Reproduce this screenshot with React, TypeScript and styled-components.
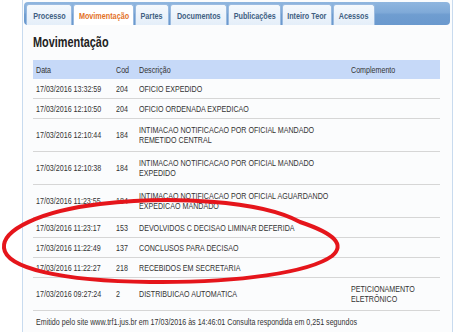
import React from "react";
import styled, { createGlobalStyle } from "styled-components";

const Global = createGlobalStyle`
  html, body { margin: 0; padding: 0; background: #ffffff; }
  body { font-family: "Liberation Sans", Arial, sans-serif; color: #333; overflow: hidden; }
`;

const Page = styled.div`
  position: relative;
  width: 472px;
  height: 332px;
  overflow: hidden;
`;

/* The source screenshot is horizontally condensed: text is drawn narrow. */
const Narrow = styled.span<{ $k?: number }>`
  display: inline-block;
  white-space: nowrap;
  transform: scaleX(${p => p.$k ?? 0.79});
  transform-origin: 0 50%;
`;

const Line = styled(Narrow)`
  display: block;
`;

const Panel = styled.div`
  margin-left: 22px;
  width: 429px;
  height: 330px;
  border-left: 1px solid #c8dbef;
  border-right: 1px solid #c8dbef;
  background: #fbfcfd;
  padding-top: 2px;
`;

const TabBar = styled.div`
  display: flex;
  align-items: flex-end;
  gap: 1px;
  height: 23px;
  margin: 0 2px 0 1px;
  padding-left: 2px;
  border-radius: 4px;
  background: linear-gradient(#8fb6df 0%, #80aad8 45%, #6f9dd0 55%, #6a99ce 100%);
  box-sizing: border-box;
`;

const Tab = styled.div<{ $active?: boolean; $w: number }>`
  width: ${p => p.$w}px;
  height: 21px;
  display: flex;
  align-items: center;
  justify-content: center;
  border: 1px solid #9bbbe0;
  border-bottom: none;
  border-radius: 3px 3px 0 0;
  background: ${p => (p.$active ? "#ffffff" : "linear-gradient(#f5f9fd, #e4eef9)")};
  color: ${p => (p.$active ? "#e3711f" : "#3f5f82")};
  font-size: 9.5px;
  font-weight: bold;
  box-sizing: border-box;
  overflow: visible;
`;

const TabLabel = styled.span`
  display: inline-block;
  white-space: nowrap;
  transform: scaleX(0.76);
  transform-origin: 50% 50%;
`;

const Content = styled.div`
  padding: 0 11px 0 10px;
`;

const Heading = styled.h2`
  margin: 0;
  padding-top: 9px;
  height: 35px;
  box-sizing: border-box;
  font-size: 14.5px;
  line-height: 16px;
  font-weight: bold;
  color: #222;
`;

const Table = styled.table`
  width: 407px;
  table-layout: fixed;
  border-collapse: collapse;
  font-size: 9px;
  color: #333;
`;

const HeadCell = styled.th<{ $w?: number }>`
  background: #c6d9f8;
  height: 19px;
  padding: 0 0 0 3px;
  text-align: left;
  font-weight: normal;
  color: #333;
  width: ${p => (p.$w ? `${p.$w}px` : "auto")};
  overflow: visible;
`;

const Row = styled.tr`
  border-bottom: 1px solid #d6d6d6;
`;

const Cell = styled.td<{ $tall?: boolean }>`
  padding: ${p => (p.$tall ? "6px 0 6px 3px" : "4.5px 0 4.5px 3px")};
  line-height: 10px;
  vertical-align: middle;
  overflow: visible;
`;

const Footer = styled.div`
  padding: 6px 0 0 3px;
  font-size: 9px;
  line-height: 10px;
  color: #333;
`;

const Ellipse = styled.svg`
  position: absolute;
  left: 0;
  top: 0;
  pointer-events: none;
`;

type Mov = { d: string; c: string; desc: string[]; comp?: string[] };

const rows: Mov[] = [
  { d: "17/03/2016 13:32:59", c: "204", desc: ["OFICIO EXPEDIDO"] },
  { d: "17/03/2016 12:10:50", c: "204", desc: ["OFICIO ORDENADA EXPEDICAO"] },
  { d: "17/03/2016 12:10:44", c: "184", desc: ["INTIMACAO NOTIFICACAO POR OFICIAL MANDADO", "REMETIDO CENTRAL"] },
  { d: "17/03/2016 12:10:38", c: "184", desc: ["INTIMACAO NOTIFICACAO POR OFICIAL MANDADO", "EXPEDIDO"] },
  { d: "17/03/2016 11:23:55", c: "184", desc: ["INTIMACAO NOTIFICACAO POR OFICIAL AGUARDANDO", "EXPEDICAO MANDADO"] },
  { d: "17/03/2016 11:23:17", c: "153", desc: ["DEVOLVIDOS C DECISAO LIMINAR DEFERIDA"] },
  { d: "17/03/2016 11:22:49", c: "137", desc: ["CONCLUSOS PARA DECISAO"] },
  { d: "17/03/2016 11:22:27", c: "218", desc: ["RECEBIDOS EM SECRETARIA"] },
  { d: "17/03/2016 09:27:24", c: "2", desc: ["DISTRIBUICAO AUTOMATICA"], comp: ["PETICIONAMENTO", "ELETRÔNICO"] },
];

const tabs: { label: string; w: number }[] = [
  { label: "Processo", w: 46 },
  { label: "Movimentação", w: 61 },
  { label: "Partes", w: 34 },
  { label: "Documentos", w: 57 },
  { label: "Publicações", w: 53 },
  { label: "Inteiro Teor", w: 50 },
  { label: "Acessos", w: 42 },
];

export default function App() {
  return (
    <Page>
      <Global />
      <Panel>
        <TabBar>
          {tabs.map(t => (
            <Tab key={t.label} $w={t.w} $active={t.label === "Movimentação"}>
              <TabLabel>{t.label}</TabLabel>
            </Tab>
          ))}
        </TabBar>
        <Content>
          <Heading>
            <Narrow $k={0.75}>Movimentação</Narrow>
          </Heading>
          <Table>
            <colgroup>
              <col style={{ width: 80 }} />
              <col style={{ width: 23 }} />
              <col style={{ width: 212 }} />
              <col />
            </colgroup>
            <thead>
              <tr>
                <HeadCell><Narrow>Data</Narrow></HeadCell>
                <HeadCell><Narrow>Cod</Narrow></HeadCell>
                <HeadCell><Narrow>Descrição</Narrow></HeadCell>
                <HeadCell><Narrow>Complemento</Narrow></HeadCell>
              </tr>
            </thead>
            <tbody>
              {rows.map(r => {
                const tall = r.desc.length > 1 || (r.comp?.length ?? 0) > 1;
                return (
                  <Row key={r.d}>
                    <Cell $tall={tall}><Narrow>{r.d}</Narrow></Cell>
                    <Cell $tall={tall}><Narrow>{r.c}</Narrow></Cell>
                    <Cell $tall={tall}>
                      {r.desc.map((l, i) => (
                        <Line key={i}>{l}</Line>
                      ))}
                    </Cell>
                    <Cell $tall={tall}>
                      {r.comp?.map((l, i) => (
                        <Line key={i}>{l}</Line>
                      ))}
                    </Cell>
                  </Row>
                );
              })}
            </tbody>
          </Table>
          <Footer>
            <Narrow>Emitido pelo site www.trf1.jus.br em 17/03/2016 às 14:46:01 Consulta respondida em 0,251 segundos</Narrow>
          </Footer>
        </Content>
      </Panel>
      <Ellipse width="472" height="332" viewBox="0 0 472 332">
        <path
          d="M 300 222 C 260 200, 170 196, 100 204 C 40 211, 2 230, 4 248 C 6 268, 60 281, 150 282 C 240 283, 310 272, 332 256 C 345 245, 336 234, 300 222"
          fill="none"
          stroke="#e5151b"
          strokeWidth="4"
          strokeLinecap="round"
        />
      </Ellipse>
    </Page>
  );
}
